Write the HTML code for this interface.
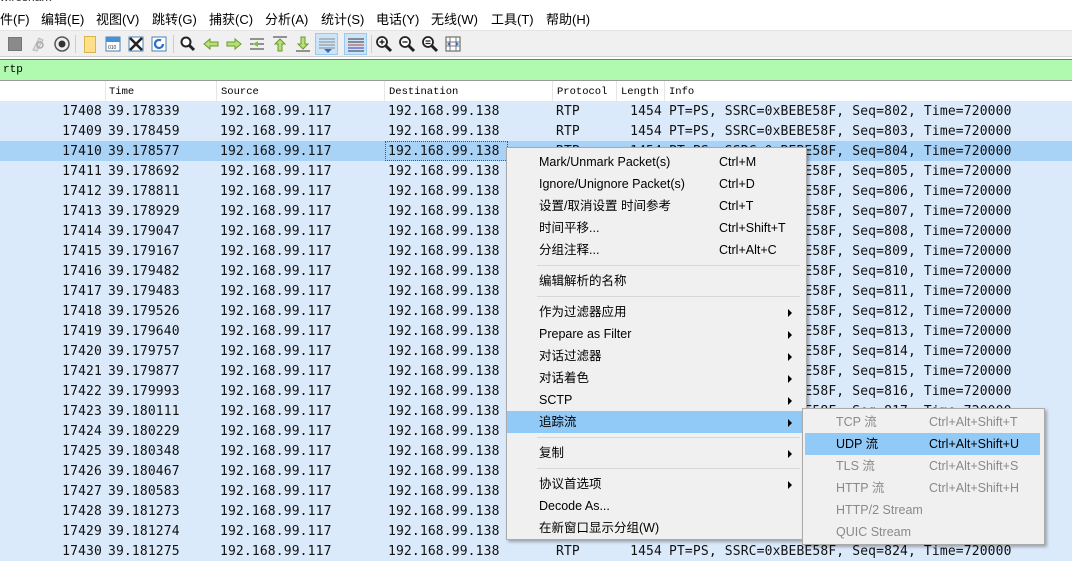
<!DOCTYPE html>
<html><head><meta charset="utf-8">
<style>
*{margin:0;padding:0;box-sizing:border-box}
body{width:1072px;height:562px;overflow:hidden;background:#fff;position:relative;font-family:"Liberation Sans","Noto Sans CJK SC",sans-serif;font-size:13px;color:#000}
.a{position:absolute;white-space:nowrap}
.menu span{position:absolute;top:9px;font-size:13px}
.row{position:absolute;left:0;width:1072px;height:20px;background:#dbeafb;font-family:"DejaVu Sans Mono",monospace;font-size:13px;line-height:22px;color:#111;letter-spacing:.14px}
.row span{position:absolute;top:0}
.hd{position:absolute;top:82px;left:0;width:1072px;height:19px;background:#fff;font-family:"Liberation Mono",monospace;font-size:10.5px;line-height:20px}
.hd i{position:absolute;top:-1px;width:1px;height:20px;background:#e6e6e6}
.ic{position:absolute;top:35px;width:18px;height:18px}
.cm{position:absolute;left:506px;top:147px;width:301px;height:393px;background:#f0f0f0;border:1px solid #aaa;box-shadow:2px 2px 3px rgba(0,0,0,.3)}
.it{position:absolute;left:0;width:100%;height:22px;line-height:22px;font-size:12.5px}
.it .t{position:absolute;left:32px}
.it .k{position:absolute;left:212px}
.it .r{position:absolute;left:281px;top:8px;width:0;height:0;border-left:4px solid #000;border-top:4px solid transparent;border-bottom:4px solid transparent}
.sep{position:absolute;left:30px;right:6px;height:1px;background:#d7d7d7}
.sm{position:absolute;left:802px;top:408px;width:243px;height:137px;background:#f0f0f0;border:1px solid #aaa;box-shadow:2px 2px 3px rgba(0,0,0,.3)}
.sm .it{color:#8a8a8a}
.sm .t{left:33px}.sm .k{left:126px}
</style></head><body>
<div class="a" style="left:0;top:-10px;font-size:12px;color:#333">wireshark</div>
<div class="menu a" style="left:0;top:0;width:1072px;height:30px">
<span style="left:0">件(F)</span><span style="left:41px">编辑(E)</span><span style="left:96px">视图(V)</span><span style="left:152px">跳转(G)</span><span style="left:209px">捕获(C)</span><span style="left:265px">分析(A)</span><span style="left:321px">统计(S)</span><span style="left:376px">电话(Y)</span><span style="left:431px">无线(W)</span><span style="left:491px">工具(T)</span><span style="left:546px">帮助(H)</span>
</div>
<div class="a" style="left:0;top:30px;width:1072px;height:27px;background:#f0f0f0;border-top:1px solid #e4e4e4;border-bottom:1px solid #d0d0d0"></div>
<div class="ic" style="left:8px;top:37px;width:14px;height:14px;background:#8a8a8a;border:1px solid #777"></div>
<svg class="ic" style="left:29px" viewBox="0 0 18 18"><path d="M4 15 L10 3 L14 5 L8 16Z" fill="#ddd" stroke="#bbb"/><circle cx="11" cy="10" r="3" fill="none" stroke="#aaa" stroke-width="1.5"/></svg>
<svg class="ic" style="left:53px" viewBox="0 0 18 18"><circle cx="9" cy="9" r="7" fill="#eee" stroke="#555" stroke-width="1.5"/><circle cx="9" cy="9" r="3.5" fill="#333"/></svg>
<div class="a" style="left:75px;top:35px;width:1px;height:18px;background:#ccc"></div>
<div class="ic" style="left:84px;top:36px;width:12px;height:17px;background:#fde18a;border:1px solid #d9b44a"></div>
<svg class="ic" style="left:104px" viewBox="0 0 18 18"><rect x="2" y="2" width="14" height="14" fill="#fff" stroke="#4a7fb5"/><rect x="2" y="2" width="14" height="5" fill="#4a90d9"/><text x="4" y="14" font-size="5" fill="#333" font-family="Liberation Sans">010</text></svg>
<svg class="ic" style="left:127px" viewBox="0 0 18 18"><rect x="2" y="2" width="14" height="14" fill="#fff" stroke="#4a7fb5"/><path d="M3 3L15 15M15 3L3 15" stroke="#222" stroke-width="2.5"/></svg>
<svg class="ic" style="left:150px" viewBox="0 0 18 18"><rect x="2" y="2" width="14" height="14" fill="#fff" stroke="#4a7fb5"/><path d="M13 9a4 4 0 1 1-2-3.5" fill="none" stroke="#2a6fc9" stroke-width="2.2"/></svg>
<div class="a" style="left:173px;top:35px;width:1px;height:18px;background:#ccc"></div>
<svg class="ic" style="left:179px" viewBox="0 0 18 18"><circle cx="7" cy="7" r="4.5" fill="#fff" stroke="#222" stroke-width="2"/><path d="M10 10L15 15" stroke="#222" stroke-width="3"/></svg>
<svg class="ic" style="left:202px" viewBox="0 0 18 18"><path d="M2 9L8 4V7H16V11H8V14Z" fill="#b7e07a" stroke="#6a9a2a"/></svg>
<svg class="ic" style="left:225px" viewBox="0 0 18 18"><path d="M16 9L10 4V7H2V11H10V14Z" fill="#b7e07a" stroke="#6a9a2a"/></svg>
<svg class="ic" style="left:248px" viewBox="0 0 18 18"><path d="M2 4H16M2 9H16M2 14H16" stroke="#333"/><path d="M5 9L10 6V12Z" fill="#7bc13b"/></svg>
<svg class="ic" style="left:271px" viewBox="0 0 18 18"><path d="M2 2H16" stroke="#333"/><path d="M9 4L4 9H7V16H11V9H14Z" fill="#b7e07a" stroke="#6a9a2a"/></svg>
<svg class="ic" style="left:294px" viewBox="0 0 18 18"><path d="M2 16H16" stroke="#333"/><path d="M9 14L4 9H7V2H11V9H14Z" fill="#b7e07a" stroke="#6a9a2a"/></svg>
<div class="a" style="left:315px;top:33px;width:23px;height:22px;background:#cce4f7;border:1px solid #99c9ef"></div>
<svg class="ic" style="left:318px;top:36px" viewBox="0 0 18 18"><path d="M1 3H17M1 6H17M1 9H17M1 12H17" stroke="#888"/><path d="M6 13H14L10 17Z" fill="#2a6fc9"/></svg>
<div class="a" style="left:344px;top:33px;width:23px;height:22px;background:#cce4f7;border:1px solid #99c9ef"></div>
<svg class="ic" style="left:347px;top:36px" viewBox="0 0 18 18"><path d="M1 3H17M1 6H17M1 9H17M1 12H17M1 15H17" stroke="#333"/><path d="M1 9H17" stroke="#c33"/><path d="M1 12H17" stroke="#33c"/></svg>
<div class="a" style="left:371px;top:35px;width:1px;height:18px;background:#ccc"></div>
<svg class="ic" style="left:375px" viewBox="0 0 18 18"><circle cx="7" cy="7" r="5" fill="#fff" stroke="#222" stroke-width="1.8"/><path d="M11 11L16 16" stroke="#222" stroke-width="3"/><path d="M4.5 7H9.5M7 4.5V9.5" stroke="#222" stroke-width="1.4"/></svg>
<svg class="ic" style="left:398px" viewBox="0 0 18 18"><circle cx="7" cy="7" r="5" fill="#fff" stroke="#222" stroke-width="1.8"/><path d="M11 11L16 16" stroke="#222" stroke-width="3"/><path d="M4.5 7H9.5" stroke="#222" stroke-width="1.4"/></svg>
<svg class="ic" style="left:421px" viewBox="0 0 18 18"><circle cx="7" cy="7" r="5" fill="#fff" stroke="#222" stroke-width="1.8"/><path d="M11 11L16 16" stroke="#222" stroke-width="3"/><path d="M4.5 6H9.5M4.5 8.5H9.5" stroke="#222" stroke-width="1.2"/></svg>
<svg class="ic" style="left:444px" viewBox="0 0 18 18"><rect x="2" y="2" width="14" height="14" fill="#fff" stroke="#555"/><path d="M6 2V16M12 2V16M2 7H16M2 11H16" stroke="#777"/><path d="M3 9L6 7V11ZM15 9L12 7V11Z" fill="#2a6fc9"/></svg>
<div class="a" style="left:0;top:59px;width:1072px;height:22px;border-top:1px solid #777;border-bottom:1px solid #999;background:#b0fab0"></div>
<div class="a" style="left:3px;top:64px;font-family:'Liberation Mono',monospace;font-size:11px">rtp</div>
<div class="hd">
<i style="left:105px"></i><i style="left:216px"></i><i style="left:384px"></i><i style="left:552px"></i><i style="left:616px"></i><i style="left:664px"></i>
<span class="a" style="left:109px">Time</span><span class="a" style="left:221px">Source</span><span class="a" style="left:389px">Destination</span><span class="a" style="left:557px">Protocol</span><span class="a" style="left:621px">Length</span><span class="a" style="left:669px">Info</span>
</div>
<div id="rows"></div>
<script>
var t=["178339","178459","178577","178692","178811","178929","179047","179167","179482","179483","179526","179640","179757","179877","179993","180111","180229","180348","180467","180583","181273","181274","181275"];
var h="";
for(var i=0;i<23;i++){
 var y=101+i*20, n=17408+i, s=802+i;
 h+='<div class="row" style="top:'+y+'px;'+(i==2?'background:#a9d2f7':'')+'">'+
 '<span style="right:970px">'+n+'</span><span style="left:108px">39.'+t[i]+'</span>'+
 '<span style="left:220px">192.168.99.117</span><span style="left:388px">192.168.99.138</span>'+
 '<span style="left:556px">RTP</span><span style="right:410px">1454</span>'+
 '<span style="left:669px">PT=PS, SSRC=0xBEBE58F, Seq='+s+', Time=720000</span></div>';
}
document.getElementById('rows').innerHTML=h;
</script>
<div class="a" style="left:385px;top:141px;width:123px;height:20px;border:1px dotted #555"></div>
<div class="cm">
<div class="it" style="top:3px"><span class="t">Mark/Unmark Packet(s)</span><span class="k">Ctrl+M</span></div>
<div class="it" style="top:25px"><span class="t">Ignore/Unignore Packet(s)</span><span class="k">Ctrl+D</span></div>
<div class="it" style="top:47px"><span class="t">设置/取消设置 时间参考</span><span class="k">Ctrl+T</span></div>
<div class="it" style="top:69px"><span class="t">时间平移...</span><span class="k">Ctrl+Shift+T</span></div>
<div class="it" style="top:91px"><span class="t">分组注释...</span><span class="k">Ctrl+Alt+C</span></div>
<div class="sep" style="top:117px"></div>
<div class="it" style="top:122px"><span class="t">编辑解析的名称</span></div>
<div class="sep" style="top:148px"></div>
<div class="it" style="top:153px"><span class="t">作为过滤器应用</span><i class="r"></i></div>
<div class="it" style="top:175px"><span class="t">Prepare as Filter</span><i class="r"></i></div>
<div class="it" style="top:197px"><span class="t">对话过滤器</span><i class="r"></i></div>
<div class="it" style="top:219px"><span class="t">对话着色</span><i class="r"></i></div>
<div class="it" style="top:241px"><span class="t">SCTP</span><i class="r"></i></div>
<div class="it" style="top:263px;background:#91c9f7"><span class="t">追踪流</span><i class="r"></i></div>
<div class="sep" style="top:289px"></div>
<div class="it" style="top:294px"><span class="t">复制</span><i class="r"></i></div>
<div class="sep" style="top:320px"></div>
<div class="it" style="top:325px"><span class="t">协议首选项</span><i class="r"></i></div>
<div class="it" style="top:347px"><span class="t">Decode As...</span></div>
<div class="it" style="top:369px"><span class="t">在新窗口显示分组(W)</span></div>
</div>
<div class="sm">
<div class="it" style="top:2px"><span class="t">TCP 流</span><span class="k">Ctrl+Alt+Shift+T</span></div>
<div class="it" style="top:24px;background:#91c9f7;color:#000;left:2px;width:235px"><span class="t" style="left:31px">UDP 流</span><span class="k" style="left:124px">Ctrl+Alt+Shift+U</span></div>
<div class="it" style="top:46px"><span class="t">TLS 流</span><span class="k">Ctrl+Alt+Shift+S</span></div>
<div class="it" style="top:68px"><span class="t">HTTP 流</span><span class="k">Ctrl+Alt+Shift+H</span></div>
<div class="it" style="top:90px"><span class="t">HTTP/2 Stream</span></div>
<div class="it" style="top:112px"><span class="t">QUIC Stream</span></div>
</div>
</body></html>
